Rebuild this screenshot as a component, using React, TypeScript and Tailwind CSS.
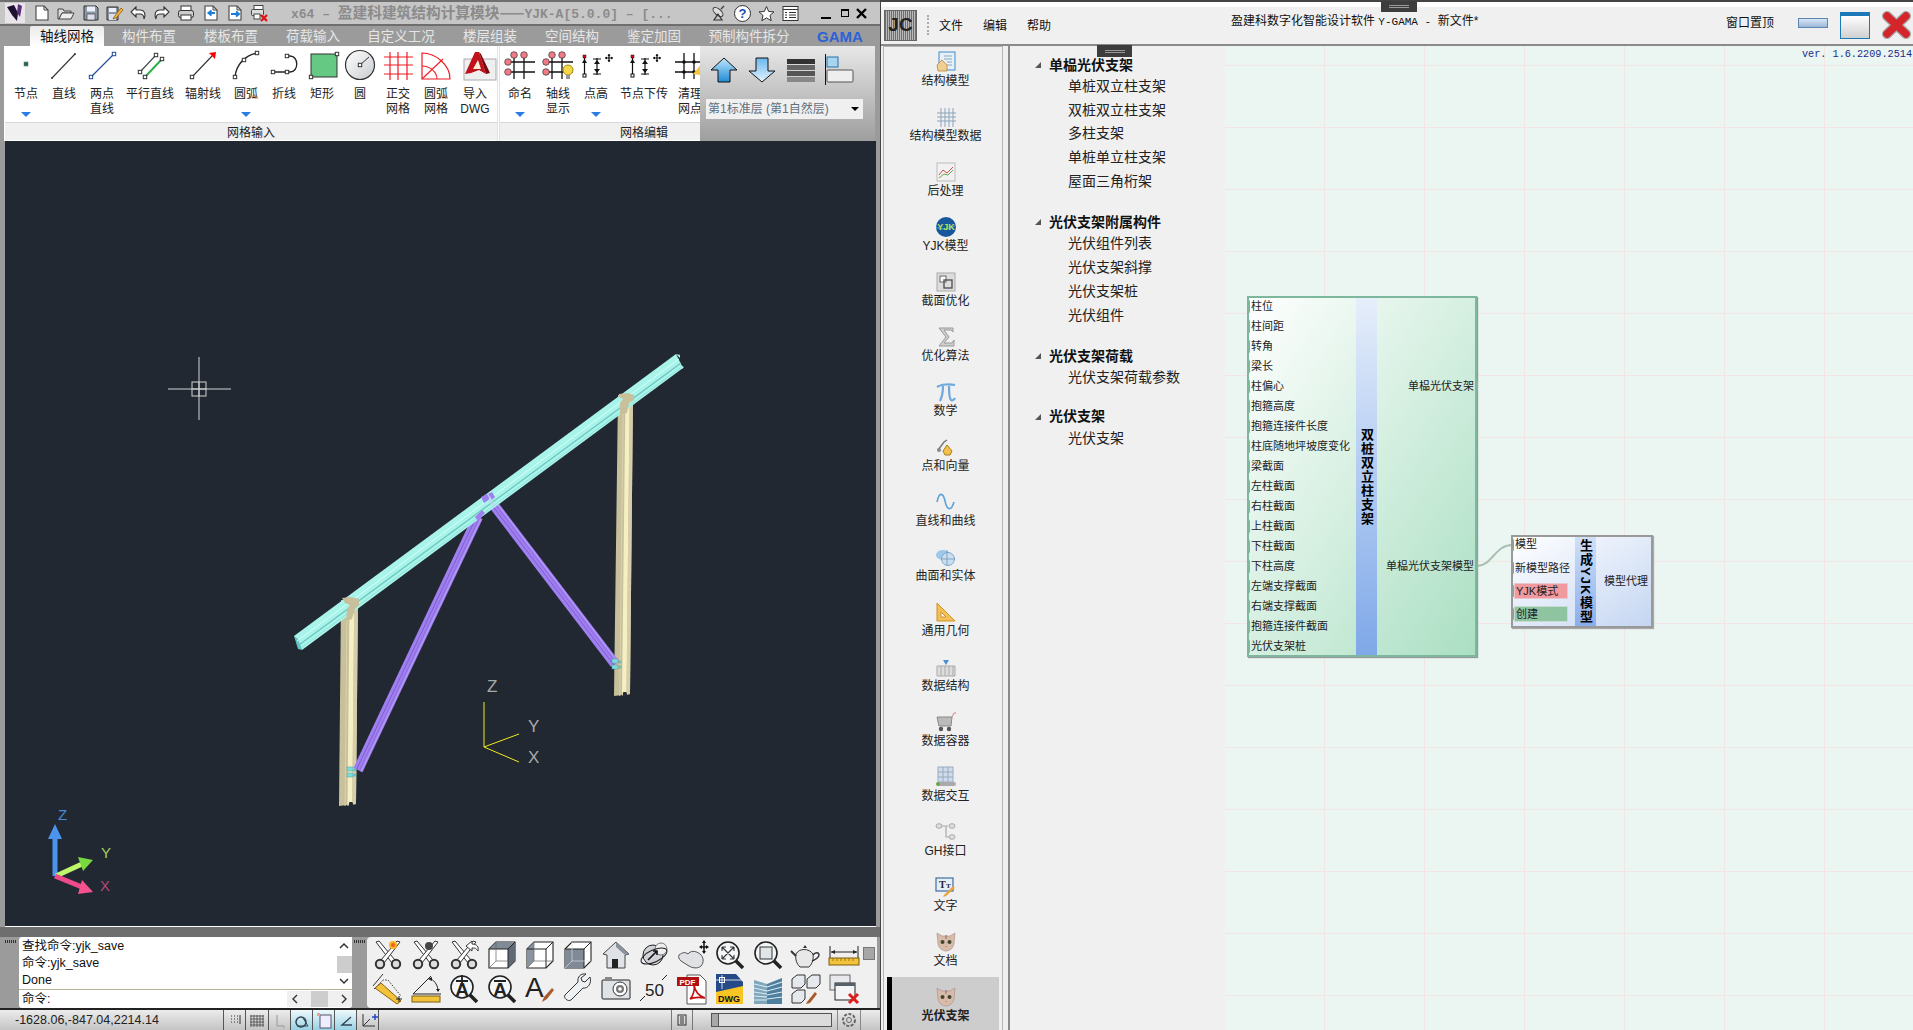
import React from "react";

const Svg = ({ s = 30, w, h, children, className = "" }: { s?: number; w?: number; h?: number; children?: React.ReactNode; className?: string }) => (
  <svg width={w ?? s} height={h ?? s} viewBox={`0 0 ${w ?? s} ${h ?? s}`} fill="none" className={`shrink-0 overflow-visible ${className}`}>
    {children}
  </svg>
);
const Sq = ({ x, y, c = "#333", f = "#fff", r = 1.7 }: { x: number; y: number; c?: string; f?: string; r?: number }) => (
  <rect x={x - r} y={y - r} width={r * 2} height={r * 2} fill={f} stroke={c} strokeWidth="1" />
);

/* ---------- quick access icons ---------- */
const DocBase = ({ children }: { children?: React.ReactNode }) => (
  <Svg s={18}>
    <path d="M3 2h8l4 4v10H3z" fill="#fff" stroke="#444" strokeWidth="1.1" />
    <path d="M11 2v4h4" stroke="#444" />
    {children}
  </Svg>
);
const quick = [
  <DocBase />,
  <Svg s={18}><path d="M1 5h5l1 2h7v2H5l-3 6H1z" fill="#ddd" stroke="#444" /><path d="M2 15l3-6h12l-3 6z" fill="#eee" stroke="#444" /></Svg>,
  <Svg s={18}><path d="M2 2h12l2 2v12H2z" fill="#8d98a6" stroke="#333" /><rect x="5" y="2.5" width="8" height="5" fill="#eef" /><rect x="5" y="10" width="8" height="6" fill="#dde" stroke="#333" strokeWidth=".6" /></Svg>,
  <Svg s={18}><path d="M2 3h11v13H2z" fill="#8d98a6" stroke="#333" /><rect x="4" y="4" width="7" height="4" fill="#eef" /><rect x="4" y="10" width="7" height="6" fill="#dde" /><path d="M9 13L16 4l2 2-7 8-3 1z" fill="#f5b53d" stroke="#8a5a10" strokeWidth=".8" /></Svg>,
  <Svg s={18}><path d="M7 3L2 8l5 5V10h4c3 0 4 2 4 5 2-4 1-9-4-9H7z" fill="#fff" stroke="#333" strokeWidth="1.1" /></Svg>,
  <Svg s={18}><path d="M11 3l5 5-5 5V10H7c-3 0-4 2-4 5-2-4-1-9 4-9h4z" fill="#fff" stroke="#333" strokeWidth="1.1" /></Svg>,
  <Svg s={18}><rect x="4" y="2" width="10" height="5" fill="#fff" stroke="#333" /><rect x="1.5" y="6.5" width="15" height="7" rx="2" fill="#ccc" stroke="#333" /><rect x="4" y="11" width="10" height="5" fill="#fff" stroke="#333" /></Svg>,
  <DocBase><path d="M13 9H7M9.5 6.5L6.5 9l3 2.5" stroke="#1c7fd6" strokeWidth="2" /></DocBase>,
  <DocBase><path d="M5 10h7M10 7.5l3 2.5-3 2.5" stroke="#1c7fd6" strokeWidth="2" /></DocBase>,
  <Svg s={18}><rect x="4" y="1.5" width="9" height="4" fill="#fff" stroke="#444" /><rect x="1.5" y="5.5" width="12" height="6" rx="1" fill="#ddd" stroke="#444" /><rect x="4" y="10" width="6" height="5" fill="#fff" stroke="#444" /><path d="M11 11l6 6M17 11l-6 6" stroke="#d11" strokeWidth="2.2" /></Svg>,
];
const quickW = [24, 25, 23, 24, 24, 24, 25, 24, 24];

const TitleBar = () => (
  <div className="h-[26px] flex items-center bg-[#c6c6c6] border-t-2 border-b-2 border-[#6e6e6e] pl-[5px] shrink-0">
    <Svg w={20} h={20} s={20}>
      <rect width="20" height="20" fill="#e8e4ea" />
      <path d="M2 4l7-2 4 8-1 8-5-6z" fill="#1e1030" />
      <path d="M13 1l4 2-2 11-3-4z" fill="#5a2d7a" />
    </Svg>
    <div className="flex items-center ml-[8px]">
      {quick.map((q, i) => (
        <span key={i} className="block" style={{ width: quickW[i] ?? 18 }}>{q}</span>
      ))}
    </div>
    <div className="ml-[23px] w-[417px] whitespace-nowrap font-['Liberation_Mono','Noto_Sans_CJK_SC',monospace] font-bold text-[#8b8b8b] text-[13px]">
      x64 – <span className="text-[14.7px] font-['Noto_Sans_CJK_SC',sans-serif]">盈建科建筑结构计算模块——</span>YJK-A[5.0.0] – [...
    </div>
    <div className="flex items-center gap-[7px] ml-[2px]">
      <Svg s={17}><ellipse cx="8" cy="7" rx="6" ry="3" transform="rotate(40 8 7)" fill="#ddd" stroke="#333" /><path d="M8 9l4 6H4zM11 4l3-3" stroke="#333" strokeWidth="1.2" /></Svg>
      <span className="w-[17px] h-[17px] rounded-full border border-[#333] bg-white text-[#1450b8] font-bold text-[13px] leading-[15px] text-center">?</span>
      <Svg s={17}><path d="M8.5 1.5l2.2 5 5.3.4-4 3.5 1.2 5.3-4.7-2.8-4.7 2.8 1.2-5.3-4-3.5 5.3-.4z" fill="#fff" stroke="#333" /></Svg>
      <Svg s={17}><rect x="1" y="1.5" width="15" height="14" fill="#fff" stroke="#333" /><path d="M1 4.5h15M3 7.5h2M7 7.5h7M3 10h2M7 10h7M3 12.5h2M7 12.5h7" stroke="#333" /></Svg>
    </div>
    <div className="flex items-center ml-[22px]">
      <span className="w-[10px] h-[2px] bg-black mt-[9px]" />
      <span className="w-[8px] h-[8px] border border-black border-t-2 ml-[10px]" />
      <svg width="11" height="11" viewBox="0 0 11 11" className="ml-[7px]"><path d="M1 1l9 9M10 1l-9 9" stroke="#000" strokeWidth="2.4" /></svg>
    </div>
  </div>
);

const tabs: [string, number][] = [
  ["轴线网格", 82], ["构件布置", 82], ["楼板布置", 82], ["荷载输入", 82], ["自定义工况", 94], ["楼层组装", 84], ["空间结构", 80], ["鉴定加固", 84], ["预制构件拆分", 106], ["GAMA", 76],
];
const Tabs = () => (
  <div className="h-[20px] flex bg-[#9b9b9b] pl-[26px] shrink-0">
    {tabs.map(([t, w], i) => (
      <div key={t} style={{ width: w }} className="h-full flex justify-center">
        <span
          className={
            i === 0
              ? "w-[74px] text-center rounded-t-[2px] bg-gradient-to-b from-[#eaeaea] to-white text-[#111] text-[13.5px] leading-[21px]"
              : i === 9
              ? "text-center text-[#2c62d8] font-bold text-[15px] leading-[21px]"
              : "text-center text-[#e6e6e6] text-[13.5px] leading-[21px]"
          }
        >
          {t}
        </span>
      </div>
    ))}
  </div>
);

/* ---------- ribbon icons ---------- */
const DotGrid = ({ extra, dots = true }: { extra?: React.ReactNode; dots?: boolean }) => (
  <Svg>
    <path d="M0 12h30M0 22h30M9 3v26M19 3v26" stroke="#111" strokeWidth="1.3" />
    {dots && (<>
      <circle cx="9" cy="5" r="3.3" fill="#f07a86" stroke="#333" strokeWidth=".7" />
      <circle cx="19" cy="5" r="3.3" fill="#f07a86" stroke="#333" strokeWidth=".7" />
      <circle cx="3" cy="12" r="3.3" fill="#f07a86" stroke="#333" strokeWidth=".7" />
      <circle cx="3" cy="22" r="3.3" fill="#f07a86" stroke="#333" strokeWidth=".7" />
    </>)}
    {extra}
  </Svg>
);
const PointH = ({ dx = 0 }: { dx?: number }) => (
  <Svg w={42} h={30}>
    <g transform={`translate(${dx} 0)`}>
      <rect x="8" y="5" width="3" height="3" fill="#f00" stroke="#111" strokeWidth=".5" />
      <path d="M9.5 8v17" stroke="#111" strokeWidth="1.2" />
      <path d="M7 13h5l-2.5-4z" fill="#111" />
      <rect x="8" y="24" width="3" height="3" fill="#fff" stroke="#111" />
      <path d="M22 8v17M18 9h8M18 24h8" stroke="#111" strokeWidth="1.2" />
      <path d="M19 14h6l-3-4zM19 19h6l-3 4z" fill="#111" />
      <path d="M30 8h8M34 4v8" stroke="#111" strokeWidth="1.2" />
      <path d="M30 8l2-1.5v3zM38 8l-2-1.5v3zM34 4l-1.5 2h3zM34 12l-1.5-2h3z" fill="#111" />
    </g>
  </Svg>
);
const group1: { l: string[]; w: number; arrow?: boolean; i: React.ReactNode }[] = [
  { l: ["节点"], w: 38, arrow: true, i: <Svg><rect x="13" y="12" width="4" height="4" fill="#1f6a4c" stroke="#777" strokeWidth=".6" /></Svg> },
  { l: ["直线"], w: 38, i: <Svg><path d="M3 28L26 4" stroke="#333" strokeWidth="1.1" /><circle cx="3" cy="28" r="1" fill="#333" /><circle cx="26" cy="4" r="1" fill="#333" /></Svg> },
  { l: ["两点", "直线"], w: 38, i: <Svg><path d="M4 27L27 4" stroke="#1c4a96" strokeWidth="1.1" /><Sq x={4} y={27} c="#1c4a96" /><Sq x={27} y={4} c="#1c4a96" /></Svg> },
  { l: ["平行直线"], w: 58, i: <Svg><path d="M5 22L21 5" stroke="#444" strokeWidth="1.1" /><path d="M10 27L27 9" stroke="#2bb04d" strokeWidth="2" /><Sq x={5} y={22} /><Sq x={21} y={5} /><Sq x={10} y={27} /><Sq x={27} y={9} /></Svg> },
  { l: ["辐射线"], w: 48, i: <Svg><path d="M4 27L24 6" stroke="#333" strokeWidth="1.1" /><Sq x={4} y={27} /><path d="M21 3l7-1-1 7z" fill="#f00" /></Svg> },
  { l: ["圆弧"], w: 38, arrow: true, i: <Svg><path d="M4 27C5 15 14 5 26 3" stroke="#222" strokeWidth="1.4" /><Sq x={4} y={27} /><Sq x={13} y={10} /><Sq x={26} y={3} /></Svg> },
  { l: ["折线"], w: 38, i: <Svg><path d="M5 22h16c9 0 9-16 0-16h-3" stroke="#222" strokeWidth="1.3" /><Sq x={4} y={22} /><Sq x={18} y={22} /><Sq x={18} y={6} /></Svg> },
  { l: ["矩形"], w: 38, i: <Svg><rect x="4" y="4" width="26" height="23" fill="#66c983" stroke="#333" /><Sq x={30} y={4} /><Sq x={4} y={27} /></Svg> },
  { l: ["圆"], w: 38, i: <Svg><circle cx="15" cy="15" r="14.5" fill="url(#cg)" stroke="#333" strokeWidth="1.2" /><defs><linearGradient id="cg" x1="0" y1="0" x2="1" y2="1"><stop stopColor="#fff" /><stop offset="1" stopColor="#c8ccd0" /></linearGradient></defs><path d="M15 15L24 7" stroke="#333" /><Sq x={15} y={15} /></Svg> },
  { l: ["正交", "网格"], w: 38, i: <Svg><path d="M1 7h29M1 15h29M1 24h29M7 2v28M15 2v28M24 2v28" stroke="#ee1c25" strokeWidth="1.2" /></Svg> },
  { l: ["圆弧", "网格"], w: 38, i: <Svg><path d="M1 29V3c14 0 28 12 28 26z" stroke="#ee1c25" strokeWidth="1.2" /><path d="M1 29L22 9M1 16c8 0 15 6 15 13" stroke="#ee1c25" strokeWidth="1.1" /></Svg> },
  { l: ["导入", "DWG"], w: 40, i: <Svg><rect x="4" y="9" width="32" height="21" fill="#efefef" stroke="#aaa" /><path d="M5 24L15 2l4 0 7 22-7-4-8 3z" fill="#c1121a" /><path d="M13 19h8l-3-9z" fill="#ffeed8" /><path d="M26 24l4-1-9-19-2-2z" fill="#7a0a10" /></Svg> },
];
const group2: { l: string[]; w: number; arrow?: boolean; i: React.ReactNode }[] = [
  { l: ["命名"], w: 40, arrow: true, i: <DotGrid /> },
  { l: ["轴线", "显示"], w: 36, i: <DotGrid extra={<><circle cx="25" cy="20" r="5" fill="#f5d84a" stroke="#a88a10" /><rect x="23" y="25" width="4" height="4" fill="#999" /></>} /> },
  { l: ["点高"], w: 40, arrow: true, i: <PointH /> },
  { l: ["节点下传"], w: 56, i: <PointH /> },
  { l: ["清理", "网点"], w: 36, i: <DotGrid dots={false} extra={<><circle cx="9" cy="12" r="1.8" fill="#111" /><circle cx="19" cy="12" r="1.8" fill="#111" /><circle cx="9" cy="22" r="1.8" fill="#111" /><circle cx="19" cy="22" r="1.8" fill="#111" /><path d="M18 24l9-11 6 13z" fill="#f2c53a" /></>} /> },
];

const RibbonItem = ({ it }: { it: (typeof group1)[number] }) => (
  <div style={{ width: it.w }} className="shrink-0 h-full flex flex-col items-center pt-[4px]">
    <div className="h-[30px] flex justify-center">{it.i}</div>
    <div className="mt-[7px] text-[12px] leading-[15px] text-[#222] text-center whitespace-nowrap">
      {it.l.map((x) => <div key={x}>{x}</div>)}
    </div>
    {it.arrow && <span className="mt-[10px] w-0 h-0 border-x-[5px] border-x-transparent border-t-[5px] border-t-[#2a7de1]" />}
  </div>
);

const Arrow = ({ up }: { up?: boolean }) => (
  <Svg w={28} h={26}>
    <defs>
      <linearGradient id={up ? "au" : "ad"} x1="0" y1="0" x2="0" y2="1">
        <stop stopColor={up ? "#bfe6fb" : "#6cb7ee"} />
        <stop offset="1" stopColor={up ? "#1f8bd6" : "#e3f3fd"} />
      </linearGradient>
    </defs>
    {up ? (
      <path d="M14 1L27 13h-7v12H8V13H1z" fill="url(#au)" stroke="#111" />
    ) : (
      <path d="M8 1h12v13h7L14 25 1 14h7z" fill="url(#ad)" stroke="#111" />
    )}
  </Svg>
);

const Ribbon = () => (
  <div className="h-[95px] flex bg-[#9b9b9b] shrink-0 pl-[4px]">
    <div className="w-[493px] flex flex-col bg-white border-l border-white">
      <div className="h-[76px] flex pl-[2px] overflow-hidden">{group1.map((it) => <RibbonItem key={it.l.join()} it={it} />)}</div>
      <div className="h-[18px] pt-[2px] bg-[#f0f0f0] border-t border-[#d8d8d8] text-[12px] leading-[16px] text-center text-[#222]">网格输入</div>
    </div>
    <div className="w-[3px] bg-white border-x border-[#e2e2e2]" />
    <div className="w-[200px] flex flex-col bg-white overflow-hidden">
      <div className="h-[76px] flex">{group2.map((it) => <RibbonItem key={it.l.join()} it={it} />)}</div>
      <div className="h-[18px] pt-[2px] bg-[#f0f0f0] border-t border-[#d8d8d8] text-[12px] leading-[16px] text-center text-[#222] pl-[118px] pr-[30px]">网格编辑</div>
    </div>
    <div className="w-[175px] bg-gradient-to-b from-[#e8e8e8] to-[#9e9e9e] px-[6px] pt-[8px]">
      <div className="flex items-center h-[32px] pl-[4px]">
        <Arrow up />
        <span className="ml-[10px]"><Arrow /></span>
        <span className="ml-[10px]">
          <Svg w={30} h={26}>
            <path d="M1 2h28v5H1z" fill="#333" /><path d="M1 8h28v5H1z" fill="#666" /><path d="M1 14h28v5H1z" fill="#555" /><path d="M1 20h28v5H1z" fill="#888" />
          </Svg>
        </span>
        <span className="ml-[9px]">
          <Svg w={30} h={32}>
            <path d="M.5 0v31" stroke="#111" />
            <rect x="2" y="3" width="11" height="10" fill="#a8d4ee" stroke="#2673ad" />
            <rect x="2" y="16" width="26" height="12" rx="1" fill="#eee" stroke="#555" />
          </Svg>
        </span>
      </div>
      <div className="mt-[13px] h-[20px] w-[157px] bg-[#f0f0f0] flex items-center pl-[2px] pr-[4px] justify-between">
        <span className="text-[12px] text-[#5f6f80] whitespace-nowrap">第1标准层 (第1自然层)</span>
        <span className="w-0 h-0 border-x-[4px] border-x-transparent border-t-[4px] border-t-black" />
      </div>
    </div>
  </div>
);

/* ---------- model view ---------- */
const Post = ({ x1, x2, y1, x3, x4, y2 }: { x1: number; x2: number; y1: number; x3: number; x4: number; y2: number }) => {
  const w = x2 - x1;
  const lerp = (f: number, top: boolean) => (top ? x1 + (x2 - x1) * f : x3 + (x4 - x3) * f);
  return (
    <g>
      <polygon points={`${x1},${y1} ${x2},${y1} ${x4},${y2 - 2} ${x3},${y2}`} fill="#c8c09a" />
      <polygon points={`${lerp(0.5, true)},${y1} ${lerp(0.78, true)},${y1} ${lerp(0.78, false)},${y2 - 1} ${lerp(0.5, false)},${y2}`} fill="#f7efc4" />
      <polygon points={`${lerp(0.78, true)},${y1} ${x2},${y1} ${x4},${y2 - 2} ${lerp(0.78, false)},${y2 - 1}`} fill="#d6ceaa" />
      <line x1={lerp(0.36, true)} y1={y1} x2={lerp(0.36, false)} y2={y2} stroke="#d9d2ad" />
      <path d={`M${x3 + w * 0.55} ${y2 + 1}l1 -5 3 0 1 3z`} fill="#222831" />
    </g>
  );
};
const Brace = ({ a, b, w }: { a: [number, number]; b: [number, number]; w: number }) => {
  const nx = -(b[1] - a[1]);
  const ny = b[0] - a[0];
  const l = Math.hypot(nx, ny);
  const ox = (nx / l) * w;
  const oy = (ny / l) * w;
  return (
    <g>
      <polygon points={`${a[0] + ox},${a[1] + oy} ${b[0] + ox},${b[1] + oy} ${b[0] - ox},${b[1] - oy} ${a[0] - ox},${a[1] - oy}`} fill="#a07ff2" />
      <line x1={a[0] + ox * 0.3} y1={a[1] + oy * 0.3} x2={b[0] + ox * 0.3} y2={b[1] + oy * 0.3} stroke="#7d60c8" />
      <line x1={a[0] - ox * 0.3} y1={a[1] - oy * 0.3} x2={b[0] - ox * 0.3} y2={b[1] - oy * 0.3} stroke="#8b6ed8" />
      <line x1={a[0] - ox * 0.7} y1={a[1] - oy * 0.7} x2={b[0] - ox * 0.7} y2={b[1] - oy * 0.7} stroke="#b9a0f8" />
    </g>
  );
};
const Clip = ({ x, y }: { x: number; y: number }) => (
  <g fill="#7fdcdc" stroke="#4c9aa0" strokeWidth=".5">
    <rect x={x} y={y} width="6" height="4" />
    <rect x={x} y={y + 6} width="6" height="4" />
    <rect x={x + 7} y={y + 2} width="2" height="2" />
    <rect x={x + 7} y={y + 7} width="2" height="2" />
  </g>
);
const ModelView = () => (
  <div className="h-[786px] ml-[5px] mr-[4px] bg-[#222831] border-b border-white shrink-0">
    <svg width="871" height="785" viewBox="5 142 871 785" className="block">
      <g stroke="#e6e6e6" strokeWidth="1" fill="none" opacity=".9">
        <path d="M168 390H231M199 358V421" />
        <rect x="192" y="383" width="14" height="14" />
        <path d="M199 383V397M192 390H206" />
      </g>
      <Post x1={341} x2={358} y1={601} x3={339} x4={356} y2={807} />
      <Post x1={618} x2={633} y1={396} x3={614} x4={630} y2={697} />
      <Brace a={[478, 518]} b={[358, 771]} w={5} />
      <Brace a={[493, 505]} b={[615, 665]} w={5} />
      <polygon points="294,637 676,355 683,369 302,651" fill="#a8f3ea" />
      <polygon points="294,637 298,640 302,651 298,650" fill="#64c4c4" />
      <path d="M297 642L679 360" stroke="#d3fff8" strokeWidth="1" />
      <path d="M299 646L681 364" stroke="#6dc5c0" strokeWidth="1.3" />
      <path d="M301 649L683 367" stroke="#8ee4da" strokeWidth="1" />
      <path d="M676 355l4 1 0 3zM681 367l3 1-2 2z" fill="#a8f3ea" />
      <path d="M342 599l9-1 8 2 0 6-4 4-3 10-6 2 1-12 3-4-5-2z" fill="#c8c09a" />
      <path d="M619 395l9-1 6 2 0 5-5 3-2 10-7 2 0-12 3-4-4-2z" fill="#c8c09a" />
      <path d="M481 498l6-3 3 5-6 4zM488 495l4-2 3 5-3 3zM475 518l7-7 3 3-7 8z" fill="#a07ff2" />
      <path d="M490 498l6 9-3 2-5-8z" fill="#b5d8ee" opacity=".7" />
      <Clip x={347} y={768} />
      <Clip x={612} y={660} />
      <path d="M484 703V748L519 735M484 748L519 763" stroke="#ecec20" strokeWidth="1" fill="none" />
      <g fontFamily="Liberation Sans, sans-serif" fontSize="17" fill="#a9a9a9">
        <text x="487" y="693">Z</text>
        <text x="528" y="733">Y</text>
        <text x="528" y="764">X</text>
      </g>
      <path d="M55 877V840" stroke="#4b94ee" strokeWidth="5" fill="none" />
      <path d="M48 840L55 825L62 840Z" fill="#4b94ee" />
      <path d="M56 877L82 865" stroke="#bdf56b" strokeWidth="5" fill="none" />
      <path d="M78 858L93 861L83 872Z" fill="#77d83f" />
      <path d="M55 877L82 888" stroke="#ee4a8c" strokeWidth="5" fill="none" />
      <path d="M82 881L93 893L78 895Z" fill="#f4528f" />
      <g fontFamily="Liberation Sans, sans-serif" fontSize="15">
        <text x="58" y="821" fill="#4b8ad8">Z</text>
        <text x="101" y="859" fill="#a8d060">Y</text>
        <text x="100" y="892" fill="#b04880">X</text>
      </g>
    </svg>
  </div>
);

/* ---------- bottom toolbar ---------- */
const Scissors = ({ children }: { children?: React.ReactNode }) => (
  <Svg>
    <path d="M3 2l3-1 16 19-3 3z" fill="#fff" stroke="#333" />
    <path d="M27 2l-3-1L8 20l3 3z" fill="#fff" stroke="#333" />
    <circle cx="7" cy="24" r="4.2" stroke="#333" strokeWidth="2" fill="#ddd" />
    <circle cx="23" cy="24" r="4.2" stroke="#333" strokeWidth="2" fill="#ddd" />
    {children}
  </Svg>
);
const Cube = ({ v }: { v: number }) => (
  <Svg>
    <path d="M2 9L9 2H28V21L21 28H2Z" fill="#fff" stroke="#222" strokeWidth="1.1" />
    {v === 0 && <><path d="M2 9L9 2H28L21 9Z" fill="#7f8a96" /><path d="M21 9V28L28 21V2Z" fill="#5f6a76" /></>}
    {v === 1 && <path d="M2 9L9 2V21L2 28Z" fill="#8a949e" />}
    {v === 2 && <rect x="2" y="9" width="19" height="19" fill="#7f8a96" />}
    <path d="M2 9H21V28M21 9L28 2" stroke="#222" />
    <path d="M9 2V21H28M9 21L2 28" stroke={v === 2 ? "#ddd" : "#666"} strokeWidth=".7" />
  </Svg>
);
const Lens = ({ children }: { children?: React.ReactNode }) => (
  <Svg>
    <path d="M20 20L28 28" stroke="#222" strokeWidth="3.6" />
    <circle cx="13" cy="13" r="11" fill="#f4f6f7" stroke="#222" strokeWidth="1.6" />
    {children}
  </Svg>
);
const tools = [
  <Scissors><circle cx="20" cy="5" r="4" fill="#fbb41f" /><circle cx="20" cy="5" r="2" fill="#f25f24" /></Scissors>,
  <Scissors><circle cx="18" cy="6" r="4" fill="#444" /></Scissors>,
  <Scissors><path d="M17 6l6-5v3c5 0 7 3 6 7-2-3-3-3-6-3v3z" fill="#fff" stroke="#333" /></Scissors>,
  <Cube v={0} />, <Cube v={1} />, <Cube v={2} />,
  <Svg><path d="M15 2L2 14l4 1v13h18V15l4-1z" fill="#dfe2e6" stroke="#444" /><path d="M11 19h6v9h-6z" fill="#222" /><path d="M15 2l13 12-4 1L15 7z" fill="#8a929c" /></Svg>,
  <Svg><circle cx="14" cy="15" r="10" fill="#cfd2d6" stroke="#222" /><circle cx="22" cy="9" r="6" fill="#eee" stroke="#777" /><ellipse cx="15" cy="16" rx="14" ry="6" stroke="#222" transform="rotate(-25 15 16)" /><path d="M9 20l9-9M14 11h4v4" stroke="#111" strokeWidth="1.6" /></Svg>,
  <Svg><path d="M2 15c4-3 6-3 9-1 2-3 7-4 12 0 4 3 4 9 1 12-3 3-9 2-12 0L4 21c-2-2-3-4-2-6z" fill="#dfe1e4" stroke="#555" /><path d="M23 7h8M27 1v12" stroke="#111" strokeWidth="1.5" /><path d="M22 7l3-2v4zM32 7l-3-2v4zM27 0l-2 3h4zM27 14l-2-3h4z" fill="#111" /></Svg>,
  <Lens><path d="M7 7l12 12M19 7L7 19M7 7h4M7 7v4M19 19h-4M19 19v-4M19 7h-4M19 7v4M7 19h4M7 19v-4" stroke="#333" strokeWidth="1.1" /></Lens>,
  <Lens><rect x="7" y="7" width="12" height="12" fill="#e2e5e8" stroke="#333" /></Lens>,
  <Svg><path d="M5 14c3-6 13-6 17 0 1 7-2 11-4 13H9c-3-3-5-7-4-13z" fill="#e8e8e8" stroke="#333" /><path d="M22 15c2-3 6-3 6 0s-3 4-7 6" stroke="#333" strokeWidth="1.4" /><path d="M5 16L0 11" stroke="#333" strokeWidth="2" /><path d="M12 8h4l-2-3z" fill="#333" /></Svg>,
  <Svg><path d="M1 6v12M29 6v12M2 12h26" stroke="#222" /><path d="M2 12l4-2v4zM28 12l-4-2v4z" fill="#222" /><rect x="0" y="18" width="30" height="7" fill="#f2c23a" stroke="#7a5c10" /><path d="M4 18v3M8 18v3M12 18v3M16 18v3M20 18v3M24 18v3" stroke="#7a5c10" strokeWidth=".7" /></Svg>,
  <Svg><path d="M1 15l9-9 5 0L28 22" stroke="#333" strokeDasharray="1.5 1.5" /><path d="M2 14l6 -5L28 27l-4 3z" fill="#f2c23a" stroke="#8a5f10" /><path d="M10 0L0 12" stroke="#333" /><path d="M26 22v6M23 25h6" stroke="#222" /></Svg>,
  <Svg><path d="M2 20L20 2M2 20h28" stroke="#222" /><path d="M20 5c4 2 7 7 7 12" stroke="#222" /><path d="M17 5l4-2 0 4zM27 18l-2-3h4z" fill="#222" /><rect x="1" y="22" width="28" height="6" fill="#f2c23a" stroke="#7a5c10" /></Svg>,
  <Lens><text x="13" y="22" textAnchor="middle" fontSize="19" fontWeight="700" fill="#222" fontFamily="Liberation Sans, sans-serif">A</text><path d="M7 7h12M13 1v11" stroke="#222" strokeWidth="1.8" /></Lens>,
  <Lens><text x="13" y="22" textAnchor="middle" fontSize="19" fontWeight="700" fill="#222" fontFamily="Liberation Sans, sans-serif">A</text><path d="M7 7h12" stroke="#222" strokeWidth="1.8" /></Lens>,
  <Svg><text x="0" y="23" fontSize="28" fill="#222" fontFamily="Liberation Sans, sans-serif">A</text><path d="M19 23l8-9 2 2-7 9-5 3z" fill="#a85a2a" /></Svg>,
  <Svg><path d="M27 3l-5 5-3-1-1-3 5-4c-5-1-9 3-8 8L2 21c-2 3 3 7 6 5l12-12c5 1 9-5 7-11z" fill="#eef1f3" stroke="#333" /></Svg>,
  <Svg><rect x="1" y="6" width="28" height="19" rx="1" fill="#dfe3e6" stroke="#222" /><rect x="4" y="3" width="7" height="3" fill="#888" /><circle cx="19" cy="15" r="7" fill="#fff" stroke="#333" /><circle cx="19" cy="15" r="4" fill="#777" /><circle cx="19" cy="15" r="1.8" fill="#fff" /></Svg>,
  <Svg><path d="M1 27l5-5M23 6l5-5" stroke="#222" /><text x="6" y="22" fontSize="17" fill="#222" fontFamily="Liberation Sans, sans-serif">50</text></Svg>,
  <Svg><path d="M10 1h13l6 6v23H10z" fill="#fff" stroke="#555" /><path d="M13 25c3-3 5-9 4-14 1 6 5 11 11 13-6-1-11-1-15 1z" stroke="#c21313" strokeWidth="1.6" /><rect x="0" y="3" width="22" height="9" fill="#b21010" /><text x="2.5" y="10.5" fontSize="8" fontWeight="700" fill="#fff" fontFamily="Liberation Sans, sans-serif">PDF</text></Svg>,
  <Svg><path d="M1 0h20l7 8v22H1z" fill="#264a88" /><path d="M1 18L28 12v18H1z" fill="#f8c525" /><path d="M1 6h26M7 1v14" stroke="#fff" strokeWidth=".8" /><rect x="4.5" y="3.5" width="5" height="5" stroke="#fff" /><text x="3" y="28" fontSize="9" fontWeight="700" fill="#111" fontFamily="Liberation Sans, sans-serif">DWG</text></Svg>,
  <Svg><path d="M1 6l13 4v20H1z" fill="#7fa6bb" /><path d="M14 10l15-6v26H14z" fill="#4f7f9f" /><path d="M1 10l13 3M1 14l13 3M1 18l13 2M1 22l13 1M1 26h13M14 13l15-5M14 17l15-4M14 21l15-3M14 25l15-2" stroke="#d8eaf2" strokeWidth="1.1" /></Svg>,
  <Svg><path d="M1 5l5-4h8v9l-4 4H1zM16 5l5-4h8v9l-4 4h-9zM1 20l5-4h8v9l-4 4H1z" fill="#e5e8ec" stroke="#333" /><path d="M16 28l8-10 2 2-7 9-4 1z" fill="#a85a2a" /></Svg>,
  <Svg><rect x="1" y="1" width="20" height="15" fill="#e7e9ec" stroke="#666" /><rect x="6" y="9" width="20" height="17" fill="#f3f4f6" stroke="#222" /><path d="M6 9h20v3H6z" fill="#55606a" /><path d="M20 20l9 9M29 20l-9 9" stroke="#e01d1d" strokeWidth="3" /></Svg>,
];
const Grip = () => (
  <div className="w-[11px] h-[3px] mt-[3px] ml-[2px] bg-[repeating-linear-gradient(90deg,#333_0,#333_1px,transparent_1px,transparent_2px)]" />
);

const Bottom = () => (
  <>
    <div className="h-[10px] bg-[#6e6e6e] shrink-0" />
    <div className="h-[71px] flex bg-[#9b9b9b] pl-[3px] shrink-0">
      <div className="w-[16px]"><Grip /></div>
      <div className="w-[333px] bg-white rounded-[3px] flex flex-col text-[12.5px] text-[#111]">
        <div className="h-[53px] flex border-b border-[#b8b29c]">
          <div className="flex-1 pl-[3px] leading-[17px] pt-[1px]">
            <div>查找命令:yjk_save</div>
            <div>命令:yjk_save</div>
            <div>Done</div>
          </div>
          <div className="w-[16px] flex flex-col items-center justify-between bg-white text-[#333]">
            <svg width="10" height="16" viewBox="0 0 10 16"><path d="M1 11l4-4 4 4" stroke="#333" strokeWidth="1.5" fill="none" /></svg>
            <span className="w-[15px] h-[17px] bg-[#cdcdcd]" />
            <svg width="10" height="14" viewBox="0 0 10 14"><path d="M1 4l4 4 4-4" stroke="#333" strokeWidth="1.5" fill="none" /></svg>
          </div>
        </div>
        <div className="flex-1 flex items-center pl-[3px]">
          <span className="flex-1">命令:</span>
          <div className="w-[65px] h-[16px] bg-[#f0f0f0] flex items-center justify-between px-[5px]">
            <svg width="6" height="10" viewBox="0 0 6 10"><path d="M5 1L1 5l4 4" stroke="#333" strokeWidth="1.4" fill="none" /></svg>
            <span className="w-[17px] h-[16px] bg-[#cdcdcd]" />
            <svg width="6" height="10" viewBox="0 0 6 10"><path d="M1 1l4 4-4 4" stroke="#333" strokeWidth="1.4" fill="none" /></svg>
          </div>
        </div>
      </div>
      <div className="w-[15px]"><Grip /></div>
      <div className="w-[496px] bg-[#f0f0f0] rounded-l-[4px] pl-[2px] grid grid-cols-[repeat(13,38px)] grid-rows-[36px_32px] justify-items-center items-center overflow-hidden">
        {tools.map((t, i) => <div key={i} className="w-[30px] h-[30px]">{t}</div>)}
      </div>
      <div className="w-[14px] bg-[#f0f0f0] pt-[10px]"><div className="w-[12px] h-[13px] bg-[#a6a6a6] border border-[#777]" /></div>
    </div>
    <div className="h-[22px] flex items-center bg-gradient-to-b from-[#ececec] to-[#c4c4c4] border-t-2 border-[#222] shrink-0 pr-[2px]">
      <div className="w-[223px] pl-[15px] text-[12.5px] text-[#222]">-1628.06,-847.04,2214.14</div>
      {[
        <Svg s={16}><path d="M4 4h1M7 4h1M10 4h1M4 7h1M7 7h1M10 7h1M4 10h1M7 10h1M10 10h1M13 3v9" stroke="#333" /></Svg>,
        <Svg s={16}><path d="M2 3v12M5 3v12M8 3v12M11 3v12M14 3v12M1 4h14M1 7h14M1 10h14M1 13h14" stroke="#444" strokeWidth=".8" /></Svg>,
        <Svg s={16}><path d="M5 3v11h7v2" stroke="#999" /></Svg>,
        <Svg s={16}><circle cx="7" cy="10" r="5" stroke="#345" strokeWidth="1.5" /><path d="M3 14h11L9 6" stroke="#345" /></Svg>,
        <Svg s={16}><rect x="4" y="3" width="11" height="13" fill="#eef" stroke="#556" /><rect x="1" y="1" width="3" height="3" fill="#f2a08a" /></Svg>,
        <Svg s={16}><path d="M13 5L4 13h10" stroke="#345" strokeWidth="1.4" /></Svg>,
        <Svg s={16}><path d="M3 2v12h12M3 14l7-7" stroke="#333" /><path d="M12 5h6M15 2v6" stroke="#2348c8" strokeWidth="1.5" /></Svg>,
      ].map((ic, i) => (
        <div
          key={i}
          className={`h-full flex items-center justify-center border-l border-[#555] ${i === 1 ? "w-[23px]" : "w-[22px]"} ${i >= 3 && i <= 5 ? "bg-gradient-to-b from-[#eef9fc] to-[#98d2e4]" : ""}`}
        >
          {ic}
        </div>
      ))}
      <div className="w-[293px] h-full border-l border-[#555]" />
      <div className="w-[22px] h-full flex items-center justify-center border-x border-[#777]">
        <Svg s={12}><rect x="2" y="1" width="8" height="10" stroke="#333" /><path d="M4 3h4M4 5h4M4 7h4M4 9h4" stroke="#333" /></Svg>
      </div>
      <div className="ml-[18px] w-[121px] h-[14px] border border-[#555] bg-[#dcdcdc]">
        <div className="w-[7px] h-full bg-[#a8a8a8] border-r border-[#555]" />
      </div>
      <div className="ml-[5px] w-[24px] h-full flex items-center justify-center border-x border-[#888]">
        <Svg s={16}><circle cx="8" cy="8" r="6" stroke="#666" strokeWidth="2" strokeDasharray="3 1.5" /><circle cx="8" cy="8" r="2.5" stroke="#666" /></Svg>
      </div>
    </div>
  </>
);

/* ---------- right window ---------- */
const sideI = (k: number) => {
  const c = "#8aa4bd";
  switch (k) {
    case 0: return <Svg s={20}><rect x="3" y="0" width="16" height="18" fill="#e8eff7" stroke="#3b8fd0" /><path d="M8 4h8M8 7h8M11 10h5M11 13h5" stroke="#8ab" /><path d="M1 13l5-5 5 5v6H2z" fill="#f0d090" stroke="#b07830" strokeWidth=".7" /></Svg>;
    case 1: return <Svg s={20}><path d="M5 1v19M9 1v19M13 1v19M17 1v19M1 6h19M1 10h19M1 14h19" stroke={c} /></Svg>;
    case 2: return <Svg s={20}><rect x="1" y="1" width="18" height="18" fill="#f1f1f1" stroke="#bbb" /><path d="M3 13l4-5 4 3 6-6" stroke="#d05050" /><path d="M3 16l5-4 4 1 5-5" stroke="#6aa84f" /></Svg>;
    case 3: return <Svg s={20}><circle cx="10" cy="10" r="10" fill="#18579c" /><path d="M0 10c5 3 14 3 20-2" stroke="#3fa9e0" /><text x="10" y="13" fontSize="9" fontWeight="700" textAnchor="middle" fill="#b8e05c" fontFamily="Liberation Sans, sans-serif">YJK</text></Svg>;
    case 4: return <Svg s={20}><rect x="1" y="1" width="18" height="18" fill="#ddd" stroke="#aaa" /><rect x="4" y="4" width="6" height="6" fill="#fff" stroke="#666" /><rect x="8" y="8" width="8" height="8" stroke="#555" strokeWidth="1.4" /></Svg>;
    case 5: return <Svg s={20}><path d="M3 1h14v4l-2-2H8l5 7-5 6h8l2-3v6H3l7-9z" fill="#cfcfcf" stroke="#999" /></Svg>;
    case 6: return <Svg s={20}><path d="M1 5c4-3 13-3 18-2M7 4c0 7-1 11-3 15M13 4c0 7 0 12 2 14 1 1 3 0 4-2" stroke="#6fa8dc" strokeWidth="2.2" /></Svg>;
    case 7: return <Svg s={20}><path d="M2 13l6-8 3-2" stroke="#777" strokeWidth="1.5" /><path d="M11 8l5 6-2 4h-5l-2-4z" fill="#f3c24a" stroke="#a87a1a" /><circle cx="3" cy="13" r="2" fill="#888" /></Svg>;
    case 8: return <Svg s={20}><path d="M1 10C3 0 7 0 9 9s6 11 9 1" stroke="#5ba3d8" strokeWidth="1.6" /></Svg>;
    case 9: return <Svg s={20}><ellipse cx="7" cy="8" rx="7" ry="5" fill="#9cc8ea" /><circle cx="12" cy="12" r="6.5" fill="#c8dff2" stroke="#7aa8cc" /><path d="M11 3v15M5 12h14" stroke="#6a8aa8" strokeWidth=".7" /></Svg>;
    case 10: return <Svg s={20}><path d="M1 1L19 19H1z" fill="#f3bf5b" stroke="#cf9320" /><path d="M5 10l5 5H5z" fill="#fff" stroke="#cf9320" /></Svg>;
    case 11: return <Svg s={20}><path d="M1 9h18v10H1z" fill="#ddd" stroke="#aaa" /><path d="M5 9v10M9 9v10M13 9v10M17 9v10" stroke="#aaa" /><path d="M7 3h6l-3 5z" fill="#4a8fd8" /></Svg>;
    case 12: return <Svg s={20}><path d="M1 5h15l-1 9H3z" fill="#bbb" stroke="#888" /><path d="M16 5l2-4h2" stroke="#c88" /><circle cx="5" cy="17" r="2.2" fill="#555" /><circle cx="13" cy="17" r="2.2" fill="#555" /></Svg>;
    case 13: return <Svg s={20}><rect x="2" y="0" width="15" height="15" fill="#cfdcf0" stroke="#9ab" /><path d="M7 0v15M12 0v15M2 5h15M2 10h15" stroke="#9ab" /><rect x="1" y="15" width="19" height="4" rx="2" fill="#aaa" /><circle cx="2" cy="17" r="2" fill="#6aa84f" /></Svg>;
    case 14: return <Svg s={20}><path d="M3 4h9M10 4v11h4" stroke="#aaa" strokeWidth="1.2" /><ellipse cx="3" cy="4" rx="3" ry="2.3" fill="#ddd" stroke="#aaa" /><ellipse cx="16" cy="4" rx="3" ry="2.3" fill="#ddd" stroke="#aaa" /><ellipse cx="16" cy="15" rx="3" ry="2.3" fill="#ddd" stroke="#aaa" /></Svg>;
    case 15: return <Svg s={20}><rect x="0" y="1" width="17" height="13" fill="#e6eef7" stroke="#3c6f9f" strokeWidth="1.2" /><text x="3" y="11" fontSize="10" fontWeight="700" fill="#223" fontFamily="Liberation Serif, serif">T</text><text x="10" y="11" fontSize="7" fontWeight="700" fill="#223" fontFamily="Liberation Serif, serif">T</text><path d="M8 18l9-9 2 2-9 8-3 1z" fill="#e8a33a" /></Svg>;
    default: return <Svg s={20}><path d="M1 1l5 3h8l5-3-1 11c-1 5-5 7-8 7s-7-2-8-7z" fill="#d7bcaa" stroke="#a88" strokeWidth=".6" /><circle cx="6.5" cy="10" r="2" fill="#443" /><circle cx="13.5" cy="10" r="2" fill="#443" /><path d="M10 3v4" stroke="#8a7060" /><path d="M9 14h2l-1 1z" fill="#b66" /></Svg>;
  }
};
const sideItems = ["结构模型", "结构模型数据", "后处理", "YJK模型", "截面优化", "优化算法", "数学", "点和向量", "直线和曲线", "曲面和实体", "通用几何", "数据结构", "数据容器", "数据交互", "GH接口", "文字", "文档", "光伏支架"];

const Sidebar = () => (
  <aside className="ml-[2px] w-[120px] border-x border-t border-[#b4b4b4] overflow-hidden shrink-0 pl-[3px] pr-[3px]">
    <div className="-mt-[5px]">
      {sideItems.map((t, i) => {
        const sel = i === 17;
        return (
          <div key={t} className={`h-[55px] flex flex-col items-center border-l-[5px] ${sel ? "border-black bg-[#cdcdcd] font-bold h-[53px]" : "border-transparent"}`}>
            <div className="mt-[10px] h-[20px]">{sideI(i)}</div>
            <div className="mt-[1px] text-[12px] leading-[16px] text-[#222] whitespace-nowrap">{t}</div>
          </div>
        );
      })}
    </div>
  </aside>
);

const tree: { h: string; c: string[]; mt: number }[] = [
  { h: "单榀光伏支架", c: ["单桩双立柱支架", "双桩双立柱支架", "多柱支架", "单桩单立柱支架", "屋面三角桁架"], mt: 7 },
  { h: "光伏支架附属构件", c: ["光伏组件列表", "光伏支架斜撑", "光伏支架桩", "光伏组件"], mt: 19 },
  { h: "光伏支架荷载", c: ["光伏支架荷载参数"], mt: 19 },
  { h: "光伏支架", c: ["光伏支架"], mt: 17 },
];
const Tree = () => (
  <div className="w-[215px] shrink-0 bg-[#f0f0f0] relative pt-[2px]">
    <div className="absolute left-[87px] -top-[1px] w-[35px] h-[12px] bg-[#3d3d3d] flex flex-col items-center justify-center gap-[1px]">
      <span className="w-[20px] h-px bg-[#999]" />
      <span className="w-[20px] h-px bg-[#999]" />
    </div>
    {tree.map((g) => (
      <div key={g.h} style={{ marginTop: g.mt }}>
        <div className="flex items-center h-[20px] pl-[25px]">
          <span className="w-0 h-0 border-l-[6px] border-l-transparent border-b-[6px] border-b-[#555]" />
          <span className="ml-[8px] text-[14px] font-bold text-[#111] whitespace-nowrap">{g.h}</span>
        </div>
        <div className="pl-[58px]">
          {g.c.map((c) => (
            <div key={c} className="h-[23.7px] leading-[23.7px] text-[14px] text-[#222] whitespace-nowrap">{c}</div>
          ))}
        </div>
      </div>
    ))}
  </div>
);

const inputs = ["柱位", "柱间距", "转角", "梁长", "柱偏心", "抱箍高度", "抱箍连接件长度", "柱底随地坪坡度变化", "梁截面", "左柱截面", "右柱截面", "上柱截面", "下柱截面", "下柱高度", "左端支撑截面", "右端支撑截面", "抱箍连接件截面", "光伏支架桩"];
const outRows: Record<number, string> = { 4: "单榀光伏支架", 13: "单榀光伏支架模型" };

const Node1 = () => (
  <div className="absolute left-[22px] top-[250px] w-[230px] h-[361px] border-2 border-[#7db79e] bg-gradient-to-br from-white to-[#aadfc3] shadow-[1px_1px_1px_#999] flex text-[11px] text-[#222]">
    <div className="w-[107px] -mt-[2px] -ml-[2px]">
      {inputs.map((t) => (
        <div key={t} className="h-[20px] flex items-center whitespace-nowrap">
          <span className="w-[3px] h-[15px] border-r border-[#7db79e] rounded-r-[3px] mr-[1px]" />
          {t}
        </div>
      ))}
    </div>
    <div className="w-[21px] ml-[2px] bg-gradient-to-b from-[#e6eefa] to-[#7fa8e8] flex items-center justify-center">
      <span className="[writing-mode:vertical-rl] text-[13px] leading-[13px] font-bold text-black tracking-[1px]">双桩双立柱支架</span>
    </div>
    <div className="flex-1 -mt-[2px] -mr-[2px]">
      {Array.from({ length: 18 }).map((_, i) => (
        <div key={i} className="h-[20px] flex items-center justify-end whitespace-nowrap">
          {outRows[i] && <>{outRows[i]}<span className="w-[3px] h-[12px] border-r border-[#7db79e] rounded-r-[3px] ml-[1px] -mr-[1px]" /></>}
        </div>
      ))}
    </div>
  </div>
);

const Node2 = () => (
  <div className="absolute left-[286px] top-[489px] w-[142px] h-[93px] border-2 border-[#999] bg-gradient-to-br from-white to-[#c5d6f2] shadow-[1px_1px_1px_#aaa] flex text-[11px] text-[#222]">
    <div className="w-[64px] -ml-[2px] -mt-[4px] flex flex-col">
      <div className="h-[23.5px] flex items-center"><span className="w-[3px] h-[14px] border-r border-[#999] rounded-r-[3px] mr-[1px]" />模型</div>
      <div className="h-[23.5px] flex items-center whitespace-nowrap"><span className="w-[3px] h-[14px] border-r border-[#999] rounded-r-[3px] mr-[1px]" />新模型路径</div>
      <div className="h-[23.5px] flex items-center"><span className="w-[3px] h-[14px] border-r border-[#999] rounded-r-[3px]" /><span className="w-[54px] h-[16px] bg-[#f09aa0] border border-[#e8c8cc] pl-[1px] leading-[14px] whitespace-nowrap">YJK模式</span></div>
      <div className="h-[23.5px] flex items-center"><span className="w-[3px] h-[14px] border-r border-[#999] rounded-r-[3px]" /><span className="w-[54px] h-[16px] bg-[#8fc4a0] border border-[#c8dcd2] pl-[1px] leading-[14px] whitespace-nowrap">创建</span></div>
    </div>
    <div className="w-[21px] bg-gradient-to-b from-[#cfe0f8] to-[#8aaeec] flex items-center justify-center">
      <span className="[writing-mode:vertical-rl] text-[13px] leading-[13px] font-bold text-black tracking-[1px] whitespace-nowrap">生成YJK模型</span>
    </div>
    <div className="flex-1 flex items-center justify-end whitespace-nowrap -mr-[2px]">
      模型代理<span className="w-[3px] h-[12px] border-r border-[#999] rounded-r-[3px] ml-[2px]" />
    </div>
  </div>
);

const Right = () => (
  <div className="flex-1 flex flex-col bg-[#f0f0f0] border-t-2 border-l border-[#444] min-w-0">
    <div className="h-[44px] relative flex items-center border-b-2 border-[#8a8a8a] shrink-0 text-[12px] text-[#111]">
      <div className="absolute inset-x-0 top-0 h-[5px] bg-white" />
      <div className="absolute left-[500px] -top-[1px] w-[36px] h-[11px] bg-[#3d3d3d] flex flex-col items-center justify-center gap-[1px]">
        <span className="w-[20px] h-px bg-[#999]" />
        <span className="w-[20px] h-px bg-[#999]" />
      </div>
      <div className="relative ml-[3px] w-[33px] h-[31px] mt-[4px] bg-[repeating-linear-gradient(90deg,#6f6f6f_0,#6f6f6f_1px,#b8b8b8_1px,#b8b8b8_2px)] border border-[#666] flex items-center justify-center text-[19px] font-bold text-[#222]">JC</div>
      <span className="ml-[10px] mt-[4px] w-[2px] h-[20px] border-l-2 border-dotted border-[#aaa]" />
      <div className="flex ml-[10px] mt-[5px]">
        <span className="w-[44px]">文件</span>
        <span className="w-[44px]">编辑</span>
        <span className="w-[44px]">帮助</span>
      </div>
      <div className="ml-[160px] mt-[-4px] w-[495px] whitespace-nowrap">
        盈建科数字化智能设计软件 <span className="font-['Liberation_Mono',monospace] text-[11px]">Y-GAMA - </span>新文件*
      </div>
      <span>窗口置顶</span>
      <span className="ml-[24px] w-[30px] h-[10px] bg-gradient-to-b from-[#d8e6f6] to-[#9cb8d8] border border-[#5b87b0]" />
      <span className="ml-[12px] w-[30px] h-[27px] mt-[4px] border border-[#1d78b8] bg-gradient-to-b from-white to-[#d0d0d0] border-t-[4px]" />
      <span className="ml-[11px] mt-[4px]">
        <svg width="31" height="28" viewBox="0 0 31 28">
          <path d="M6 5L25 23M25 5L6 23" stroke="#a8a8a8" strokeWidth="10" strokeLinecap="round" fill="none" />
          <path d="M6 5L25 23M25 5L6 23" stroke="#d4262a" strokeWidth="7.5" strokeLinecap="round" fill="none" />
        </svg>
      </span>
    </div>
    <div className="flex-1 flex min-h-0">
      <Sidebar />
      <div className="w-[5px] shrink-0" />
      <div className="flex-1 flex border-l-2 border-[#8a8a8a] min-w-0">
        <Tree />
        <div className="flex-1 relative overflow-hidden bg-[#ebf6f2] bg-[linear-gradient(#f3e5e3_1px,transparent_1px),linear-gradient(90deg,#f3e5e3_1px,transparent_1px)] bg-[size:100px_62px] bg-[position:99px_19px]">
          <div className="absolute right-[1px] top-[2px] text-[10.2px] leading-[13px] text-[#1a2a8c] font-['Liberation_Mono',monospace]">ver. 1.6.2209.2514</div>
          <svg className="absolute inset-0" width="688" height="984" viewBox="1225 46 688 984">
            <path d="M1477 566C1492 566 1495 545 1512 545" stroke="#a9bfb0" strokeWidth="2" fill="none" />
          </svg>
          <Node1 />
          <Node2 />
        </div>
      </div>
    </div>
  </div>
);

export default function App() {
  return (
    <div className="w-[1913px] h-[1030px] flex overflow-hidden bg-white font-['Liberation_Sans','Noto_Sans_CJK_SC',sans-serif]">
      <div className="w-[880px] h-full flex flex-col bg-[#9b9b9b] shrink-0">
        <TitleBar />
        <Tabs />
        <Ribbon />
        <ModelView />
        <Bottom />
      </div>
      <Right />
    </div>
  );
}
